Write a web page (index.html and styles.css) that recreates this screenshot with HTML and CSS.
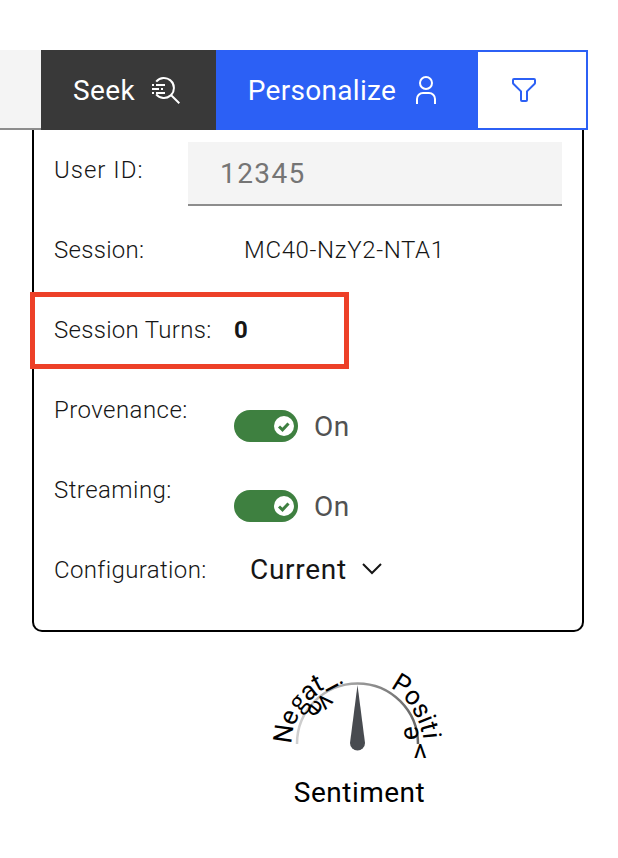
FILE: index.html
```html
<!DOCTYPE html>
<html lang="en">
<head>
<meta charset="utf-8">
<title>Session settings</title>
<link rel="stylesheet" href="styles.css">
</head>
<body>
<main class="page">
  <header class="toolbar">
    <div class="search-end"></div>
    <button class="btn seek"><span class="label-seek">Seek</span>
      <svg class="icon" viewBox="0 0 32 32" fill="currentColor"><path d="M30 28.6 22.4 21A10.9 10.9 0 0 0 24.9 14 11 11 0 0 0 5.4 7.100L7 8.300A9 9 0 1 1 7 19.700L5.400 20.900A11 11 0 0 0 21 22.400L28.600 30Z"/><path d="M6 10h9v2H6zM2 10h2v2H2zM11 14h2v2h-2zM2 18h2v2H2zM6 18h9v2H6zM2 14h7v2H2z"/></svg>
    </button>
    <button class="btn personalize"><span class="label-personalize">Personalize</span>
      <svg class="icon" viewBox="0 0 32 32" fill="none" stroke="currentColor" stroke-width="2"><circle cx="16" cy="9" r="6"/><path d="M7 30v-5a6 6 0 0 1 6-6h6a6 6 0 0 1 6 6v5"/></svg>
    </button>
    <button class="btn filter" aria-label="Filter">
      <svg class="icon" viewBox="0 0 32 32" fill="none" stroke="currentColor" stroke-width="2"><path d="M18 27h-4a1 1 0 0 1-1-1v-8.600L5.300 9.700A1 1 0 0 1 5 9V6a1 1 0 0 1 1-1h20a1 1 0 0 1 1 1v3a1 1 0 0 1-.3.700L19 17.400V26a1 1 0 0 1-1 1Z"/></svg>
    </button>
  </header>
  <section class="panel">
    <div class="row"><span class="name w-user">User ID:</span><div class="field">12345</div></div>
    <div class="row"><span class="name w-session">Session:</span><span class="session-id">MC40-NzY2-NTA1</span></div>
    <div class="row turns"><span class="name w-turns">Session Turns:</span><strong class="count">0</strong></div>
    <div class="row"><span class="name w-prov">Provenance:</span><span class="switch"><i class="track"><i class="knob"><svg viewBox="0 0 20 20"><path d="m5 10.500 3.500 3.300 6-6.300"/></svg></i></i><span>On</span></span></div>
    <div class="row"><span class="name w-stream">Streaming:</span><span class="switch"><i class="track"><i class="knob"><svg viewBox="0 0 20 20"><path d="m5 10.500 3.500 3.300 6-6.300"/></svg></i></i><span>On</span></span></div>
    <div class="row"><span class="name w-config">Configuration:</span><span class="select"><span>Current</span><svg viewBox="0 0 20 12"><path d="m1 1 9 9 9-9"/></svg></span></div>
  </section>
  <figure class="sentiment">
    <svg class="gauge" viewBox="260 660 200 110">
      <defs><linearGradient id="arc"><stop offset="0" stop-color="#d0d0d0"/><stop offset="1" stop-color="#666"/></linearGradient></defs>
      <path d="M297 744a60.500 60.500 0 0 1 121 0" fill="none" stroke="url(#arc)" stroke-width="2.500"/>
      <path class="needle" d="M357.500 685 365 743a7.500 7.500 0 1 1-15 0Z"/>
      <g class="letters">
        <text y="9" transform="translate(283.500 733.500) rotate(-82)">N</text>
        <text y="7" transform="translate(290.300 717.500) rotate(-66)">e</text>
        <text class="g" y="4" transform="translate(301 705) rotate(-50)">g</text>
        <text y="7" transform="translate(309 692.500) rotate(-38)">a</text>
        <text y="8.500" transform="translate(317.300 683) rotate(-28)">t</text>
        <text y="9" transform="translate(334 686.500) rotate(62)">i</text>
        <text y="6.500" transform="translate(324.500 701) rotate(135)">v</text>
        <text y="7" transform="translate(315 708.500) rotate(-140)">e</text>
        <text y="9" transform="translate(402 684) rotate(32)">P</text>
        <text y="7" transform="translate(412.500 697.500) rotate(46)">o</text>
        <text y="7" transform="translate(420.500 710.500) rotate(60)">s</text>
        <text y="9" transform="translate(427 719) rotate(68)">i</text>
        <text y="8.500" transform="translate(429 727) rotate(75)">t</text>
        <text y="9" transform="translate(432 735.500) rotate(84)">i</text>
        <text y="6.500" transform="translate(420.300 750.500) rotate(180)">v</text>
        <text y="7" transform="translate(411.300 733.300) rotate(-95)">e</text>
      </g>
    </svg>
    <figcaption>Sentiment</figcaption>
  </figure>
</main>
</body>
</html>
```
FILE: styles.css
```css
*, *::before { box-sizing: border-box; }
body { margin: 0; background: #fff; color: #161616; font-family: Roboto, "Liberation Sans", sans-serif; }
.page { width: 618px; height: 858px; padding-top: 50px; overflow: hidden; }
.toolbar { display: flex; width: 588px; height: 80px; }
.search-end { width: 41px; background: #f4f4f4; border-bottom: 2px solid #8d8d8d; }
.btn { display: flex; align-items: center; border: 0; padding: 0; color: #fff; font: 400 28px/36px Roboto, sans-serif; }
.btn span { padding-top: 2px; }
.icon { width: 32px; height: 32px; flex: none; }
.seek { width: 175px; padding-left: 31px; gap: 14px; background: #393939; }
.personalize { width: 262px; padding-left: 31px; gap: 13px; background: #2c60f5; }
.filter { width: 110px; padding-left: 30px; color: #2c60f5; background: #fff; border: 2px solid #2c60f5; border-left: 0; }
.label-seek { width: 64px; letter-spacing: .4px; }
.label-personalize { width: 150px; letter-spacing: .3px; }
.panel { width: 552px; height: 502px; margin-left: 32px; border: 2px solid #000; border-top: 0; border-radius: 0 0 10px 10px; }
.row { display: flex; align-items: flex-start; height: 80px; padding-left: 20px; position: relative; }
.name { width: 180px; padding-top: 24px; font-size: 24px; font-weight: 300; line-height: 32px; letter-spacing: .45px; white-space: nowrap; }
.w-user { letter-spacing: 1px; }
.w-session, .w-turns { letter-spacing: .3px; }
.w-config { letter-spacing: .38px; }
.row:first-child .name { width: 134px; }
.field { width: 374px; height: 64px; margin-top: 12px; padding: 0 32px; background: #f4f4f4; border-bottom: 2px solid #8d8d8d; color: #757575; font-size: 28px; line-height: 64px; letter-spacing: 1.400px; }
.session-id { padding: 24px 0 0 10px; font-size: 24px; line-height: 32px; font-weight: 300; letter-spacing: .65px; }
.turns::before { content: ""; position: absolute; left: -4.500px; top: 1.500px; width: 319px; height: 77px; border: 5px solid #ed4028; }
.count { padding-top: 24px; font-size: 24px; line-height: 32px; }
.switch { display: flex; align-items: center; gap: 16px; height: 32px; margin-top: 40px; color: #525252; font-size: 28px; letter-spacing: .4px; }
.track { display: flex; align-items: center; justify-content: flex-end; width: 64px; height: 32px; padding-right: 4px; border-radius: 16px; background: #3e8040; }
.knob { display: flex; width: 20px; height: 20px; border-radius: 50%; background: #fff; }
.knob path { fill: none; stroke: #3e8040; stroke-width: 3; }
.select { display: flex; align-items: center; height: 36px; margin: 21px 0 0 16px; gap: 15px; font-size: 28px; letter-spacing: .7px; }
.select svg { width: 20px; height: 12px; }
.select path { fill: none; stroke: #161616; stroke-width: 2; }
.sentiment { width: 200px; margin: 28px 0 0 260px; }
.gauge { display: block; width: 200px; height: 110px; }
.needle { fill: #484b50; }
.letters { font-size: 26px; fill: #000; text-anchor: middle; }
.letters .g { font-family: "Open Sans", sans-serif; font-size: 25px; }
figcaption { text-align: center; padding: 1px 1px 0 0; color: #000; font-size: 28px; line-height: 44px; letter-spacing: .5px; }
```
